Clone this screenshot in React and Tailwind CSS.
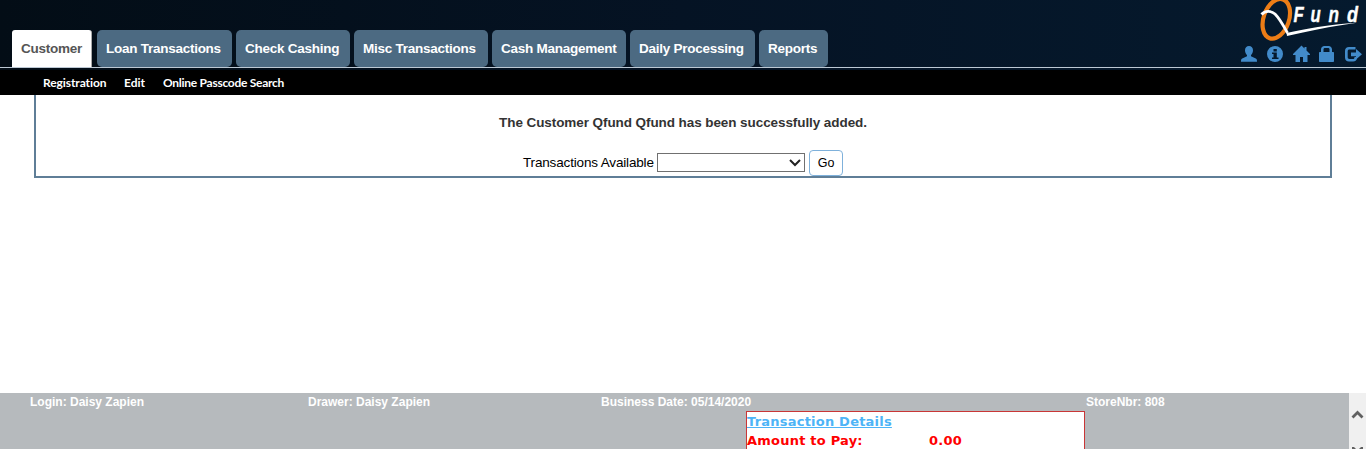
const tabs = [
  { label: 'Customer', box: 'w-[80px] mr-[5px]', active: true },
  { label: 'Loan Transactions', box: 'w-[135px] mr-1' },
  { label: 'Check Cashing', box: 'w-[114px] mr-1' },
  { label: 'Misc Transactions', box: 'w-[134px] mr-1' },
  { label: 'Cash Management', box: 'w-[134px] mr-1' },
  { label: 'Daily Processing', box: 'w-[125px] mr-1' },
  { label: 'Reports', box: 'w-[69px]' },
];

function Logo() {
  return (
    <svg className="block h-[42px] w-[106px]" viewBox="0 0 106 42" fill="none">
      <ellipse cx="16.300" cy="18.800" rx="12.700" ry="20.500" transform="rotate(19 16.300 18.800)" stroke="#ed7d16" strokeWidth="4.200" />
      <path d="M1.500 14.500C5 10.500 11 10.500 15 14C20 19 23 25 27.500 33" stroke="#fff" strokeWidth="2.800" />
      <path d="M26.500 33C45 29 68 24.500 97 22.700C70 26.500 48 31 27 36Z" fill="#fff" />
      <g fill="#fff" stroke="#fff" strokeWidth=".4" fontFamily="Liberation Sans, sans-serif" fontSize="22" fontWeight="700" fontStyle="italic">
        <text transform="translate(33.500 22) scale(.76 1)">F</text>
        <text transform="translate(50.500 22) scale(.76 1)">u</text>
        <text transform="translate(68.500 22) scale(.78 1)">n</text>
        <text transform="translate(87 22) scale(.82 1)">d</text>
      </g>
    </svg>
  );
}

function HeaderIcons() {
  return (
    <svg className="block h-[18px] w-[126px]" viewBox="0 0 126 18" fill="#428bca">
      <path d="M9 1C6.500 1 5 2.700 5 5.200C5 7.200 5.900 9.200 7 10.100V11.300L2.200 13.400C1.200 13.900 1 14.700 1 16.800H17C17 14.700 16.800 13.900 15.800 13.400L11 11.300V10.100C12.100 9.200 13 7.200 13 5.200C13 2.700 11.500 1 9 1Z" />
      <path fillRule="evenodd" d="M35 1A8 8 0 1 1 35 17A8 8 0 1 1 35 1ZM33.500 4V6.500H36.800V4ZM32 7.500V9H33.500V12.500H32V14H38.500V12.500H36.800V7.500Z" />
      <path d="M61.500 .5L53 9V10H55.500V17H60V12H63V17H67.500V10H70V9L66.500 5.500V2H64.500V3.500Z" />
      <path fillRule="evenodd" d="M80 7H81V4.500C81 2.300 82.600 1 84.300 1H88.700C90.400 1 92 2.300 92 4.500V7H93C93.700 7 94 7.400 94 8V16C94 16.600 93.600 17 93 17H80C79.400 17 79 16.600 79 16V8C79 7.400 79.400 7 80 7ZM83.500 7H89.500V4.500C89.500 3.500 89 3 88 3H85C84 3 83.500 3.500 83.500 4.500Z" />
      <path d="M115.500 2H109C106.500 2 105 3.500 105 6V12.500C105 15 106.500 16.500 109 16.500H113C115.500 16.500 117 15 117 12.500V12H114.500C114.500 13.500 114 14 113 14H109.500C108.300 14 107.700 13.500 107.700 12.300V6.300C107.700 5 108.300 4.500 109.500 4.500H115.500Z" />
      <path d="M111 7.500H116V4L122 9.300L116 14.500V11.300H111Z" />
    </svg>
  );
}

export default function App() {
  return (
    <div className="flex h-[449px] w-[1366px] flex-col overflow-hidden bg-white font-['Liberation_Sans',Arial,sans-serif] text-black">
      <header className="flex h-[70px] shrink-0 flex-col bg-linear-to-r from-[#030d16] via-[#051324] to-[#051a2e]">
        <div className="flex h-[67px] justify-between">
          <nav className="flex pt-[30px] pl-3">
            {tabs.map((tab) => (
              <a
                key={tab.label}
                className={`flex h-[37px] shrink-0 items-center pt-[2px] pl-[9px] text-[13.5px] font-bold tracking-[-0.26px] whitespace-nowrap ${tab.box} ${
                  tab.active ? 'rounded-t-[3px] border-r border-[#aaa] bg-white text-[#555]' : 'rounded-[5px] bg-[#4c6a82] text-white'
                }`}
              >
                {tab.label}
              </a>
            ))}
          </nav>
          <div className="flex w-[126px] flex-col">
            <div className="h-[45px] pl-5"><Logo /></div>
            <HeaderIcons />
          </div>
        </div>
        <div className="h-px bg-[#bcc8d4]" />
      </header>
      <nav className="flex h-[25px] shrink-0 items-center gap-[18px] bg-black pl-[43px] font-[Lato,sans-serif] text-[12px] font-bold text-white">
        <a className="w-[63px] tracking-[-0.08px] whitespace-nowrap">Registration</a>
        <a className="w-[21px] whitespace-nowrap">Edit</a>
        <a className="tracking-[-0.27px] whitespace-nowrap">Online Passcode Search</a>
      </nav>
      <main className="mx-[34px] h-[83px] shrink-0 border-x-2 border-b-2 border-[#5f7e97]">
        <p className="pt-5 text-center text-[13.5px] leading-4 font-bold tracking-[-0.08px] text-[#333]">
          The Customer Qfund Qfund has been successfully added.
        </p>
        <div className="mt-[19px] flex h-[26px] items-center pl-[487px] text-[13.5px] tracking-[-0.16px]">
          <span className="w-[134px] whitespace-nowrap">Transactions Available</span>
          <div className="mb-px flex h-[19px] w-[148px] items-center justify-end border border-[#707070] pr-[3px]">
            <svg className="h-[8px] w-[12px]" viewBox="0 0 12 8" fill="none">
              <path d="M1 1L6 6L11 1" stroke="#222" strokeWidth="2" />
            </svg>
          </div>
          <button className="ml-1 h-[26px] w-[34px] rounded-[4px] border border-[#7fb1db] bg-white text-[12.5px]">Go</button>
        </div>
      </main>
      <div className="grow" />
      <footer className="flex h-[56px] shrink-0 justify-between bg-[#b6babd]">
        <div className="flex flex-col pl-[30px]">
          <div className="flex h-[18px] text-[12px] leading-[18px] font-bold text-white">
            <span className="w-[278px]">Login: Daisy Zapien</span>
            <span className="w-[293px]">Drawer: Daisy Zapien</span>
            <span className="w-[485px]">Business Date: 05/14/2020</span>
            <span>StoreNbr: 808</span>
          </div>
          <section className="ml-[716px] h-[38px] w-[339px] overflow-hidden border border-b-0 border-[#c93636] bg-white font-['DejaVu_Sans',Verdana,sans-serif] text-[13px] leading-[19px] font-bold tracking-[0.22px]">
            <h2 className="text-[#4db4f7] underline">Transaction Details</h2>
            <div className="flex text-[#f00]">
              <span className="w-[182px]">Amount to Pay:</span>
              <span>0.00</span>
            </div>
          </section>
        </div>
        <div className="flex w-[17px] flex-col items-center justify-between overflow-hidden bg-[#f0f0f0] pt-[16px]">
          <svg className="h-[10px] w-[13px]" viewBox="0 0 13 10" fill="none">
            <path d="M1.500 8.500L6.500 3.500L11.500 8.500" stroke="#606060" strokeWidth="2.800" />
          </svg>
          <svg className="h-[2px] w-[13px]" viewBox="0 0 13 2" fill="#606060">
            <path d="M1 0H3L5 2H1ZM12 0H10L8 2H12Z" />
          </svg>
        </div>
      </footer>
    </div>
  );
}
